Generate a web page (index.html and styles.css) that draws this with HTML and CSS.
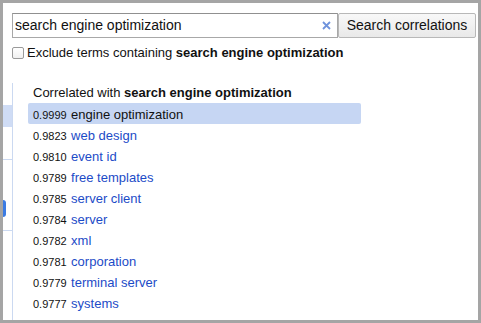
FILE: index.html
```html
<!DOCTYPE html>
<html>
<head>
<meta charset="utf-8">
<link rel="stylesheet" href="styles.css">
</head>
<body>
<div class="panel">
  <div class="search-row">
    <div class="input">
      <span class="query">search engine optimization</span>
      <svg class="clear" width="9" height="9" viewBox="0 0 9 9"><path d="M1 1L8 8M8 1L1 8" stroke="#6f93dc" stroke-width="1.8" fill="none"/></svg>
    </div>
    <div class="button">Search correlations</div>
  </div>
  <div class="exclude">
    <span class="checkbox"></span>
    <span>Exclude terms containing <b>search engine optimization</b></span>
  </div>
  <div class="main">
    <div class="sidebar">
      <div class="sb-sel"></div>
      <div class="sb-line1"></div>
      <div class="sb-pill"></div>
      <div class="sb-line2"></div>
    </div>
    <div class="content">
      <div class="header">Correlated with <b>search engine optimization</b></div>
      <div class="row selected"><span class="num">0.9999</span> <span class="term">engine optimization</span></div>
      <div class="row"><span class="num">0.9823</span> <span class="term">web design</span></div>
      <div class="row"><span class="num">0.9810</span> <span class="term">event id</span></div>
      <div class="row"><span class="num">0.9789</span> <span class="term">free templates</span></div>
      <div class="row"><span class="num">0.9785</span> <span class="term">server client</span></div>
      <div class="row"><span class="num">0.9784</span> <span class="term">server</span></div>
      <div class="row"><span class="num">0.9782</span> <span class="term">xml</span></div>
      <div class="row"><span class="num">0.9781</span> <span class="term">corporation</span></div>
      <div class="row"><span class="num">0.9779</span> <span class="term">terminal server</span></div>
      <div class="row"><span class="num">0.9777</span> <span class="term">systems</span></div>
    </div>
  </div>
</div>
</body>
</html>
```
FILE: styles.css
```css
html, body {
  margin: 0;
  padding: 0;
  background: #a5a5a5;
  width: 481px;
  height: 323px;
  overflow: hidden;
}
body {
  font-family: "Liberation Sans", Arial, sans-serif;
  color: #222;
  padding: 3px 3px 0 3px;
  box-sizing: border-box;
}
.panel {
  background: #fff;
  width: 475px;
  height: 317px;
  overflow: hidden;
}
.search-row {
  display: flex;
  padding: 10px 0 0 9px;
}
.input {
  width: 326px;
  height: 25px;
  box-sizing: border-box;
  border: 1px solid #a8a8a8;
  border-top-color: #909090;
  display: flex;
  align-items: center;
  justify-content: space-between;
  padding: 0 5px 0 2px;
  font-size: 14px;
  color: #111;
}
.query {
  line-height: 23px;
}
.clear {
  display: block;
  margin-right: 1px;
}
.button {
  width: 138px;
  height: 25px;
  box-sizing: border-box;
  border: 1px solid #b8b8b8;
  border-radius: 2px;
  background: linear-gradient(#f8f8f8, #e9e9e9);
  font-size: 14px;
  line-height: 23px;
  text-align: center;
  color: #111;
}
.exclude {
  display: flex;
  align-items: center;
  gap: 3px;
  margin-top: 7px;
  padding-left: 9px;
  font-size: 13px;
  line-height: 16px;
  color: #111;
}
.checkbox {
  width: 10px;
  height: 10px;
  border: 1px solid #9a9a9a;
  border-radius: 2px;
  background: linear-gradient(#fff, #f0f0f0);
}
.main {
  display: flex;
  margin-top: 22px;
}
.sidebar {
  width: 9px;
  border-right: 1px solid #cbd9f1;
  height: 240px;
  display: flex;
  flex-direction: column;
}
.sb-sel {
  margin-top: 22px;
  height: 22px;
  background: #cfdcf5;
}
.sb-line1 {
  margin-top: 32px;
  height: 1px;
  background: #cbd9f1;
}
.sb-pill {
  margin-top: 40px;
  height: 17px;
  width: 3px;
  background: #3b7be3;
  border-radius: 0 3px 3px 0;
}
.sb-line2 {
  margin-top: 13px;
  height: 1px;
  background: #cbd9f1;
}
.content {
  padding-left: 15px;
}
.header {
  font-size: 13px;
  line-height: 20px;
  padding-left: 5px;
  color: #111;
}
.row {
  width: 333px;
  height: 21px;
  line-height: 21px;
  padding-left: 5px;
  box-sizing: border-box;
  border-radius: 2px;
  white-space: nowrap;
}
.row.selected {
  background: #c6d6f3;
}
.num {
  font-size: 11px;
  color: #111;
}
.term {
  font-size: 13px;
  color: #1c4bc7;
}
.row.selected .term {
  color: #111;
}
```
